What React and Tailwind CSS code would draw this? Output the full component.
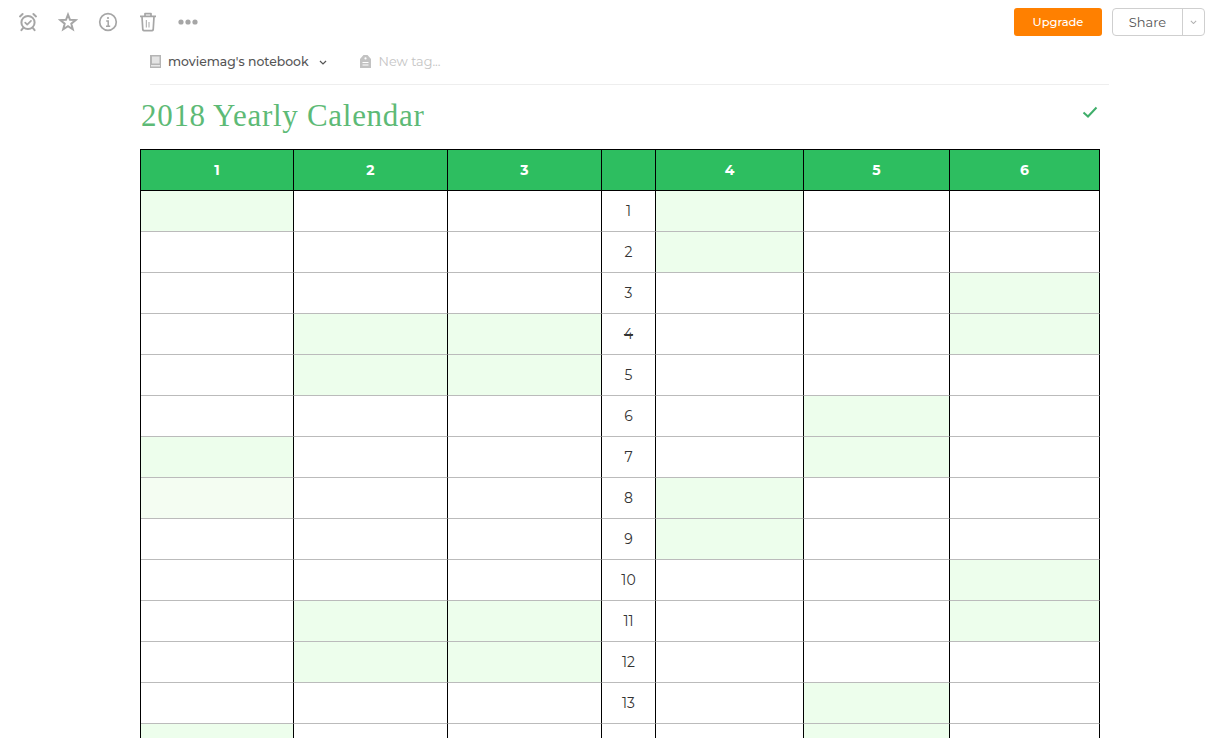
const cols = ["1", "2", "3", "", "4", "5", "6"];
const widths = ["w-[153px]", "w-[154px]", "w-[154px]", "w-[54px]", "w-[148px]", "w-[146px]", "w-[150px]"];
const fills = {
  1: [0, 4], 2: [4], 3: [6], 4: [1, 2, 6], 5: [1, 2], 6: [5], 7: [0, 5], 8: [0, 4], 9: [4],
  10: [6], 11: [1, 2, 6], 12: [1, 2], 13: [5], 14: [0, 5],
};
const rows = Array.from({ length: 14 }, (_, i) => i + 1);

function Alarm() {
  return (
    <svg width="20" height="20" viewBox="0 0 20 20" fill="none" stroke="#a6a6a6" strokeWidth="2" strokeLinecap="round" strokeLinejoin="round">
      <circle cx="10" cy="10.5" r="6.6" />
      <path d="M7.2 10.6l2 2L13 8.8" strokeWidth="1.7" />
      <path d="M2 4.4L4.6 2M18 4.4L15.4 2M5 16.2l-1.6 2M15 16.2l1.6 2" />
    </svg>
  );
}
function Star() {
  return (
    <svg width="20" height="20" viewBox="0 0 20 20" fill="none" stroke="#a6a6a6" strokeWidth="2" strokeLinejoin="miter">
      <path d="M10 2.6l2 5.2 5.8.3-4.5 3.6 1.5 5.6L10 14.2l-4.8 3.1 1.5-5.6L2.2 8.1 8 7.8z" />
    </svg>
  );
}
function Info() {
  return (
    <svg width="20" height="20" viewBox="0 0 20 20" fill="none" stroke="#a6a6a6" strokeWidth="1.7">
      <circle cx="10" cy="10" r="8.3" />
      <path d="M8.2 9h2v5M8 14.2h4.2" strokeWidth="1.5" />
      <circle cx="10" cy="6" r="1.1" fill="#a6a6a6" stroke="none" />
    </svg>
  );
}
function Trash() {
  return (
    <svg width="18" height="20" viewBox="0 0 18 20" fill="none" stroke="#a6a6a6" strokeWidth="1.7" strokeLinejoin="round">
      <path d="M1 4.4h16M6 4V1.6h6V4" />
      <path d="M3 4.6l.8 13.1a1 1 0 0 0 1 .9h8.4a1 1 0 0 0 1-.9L15 4.6" />
      <path d="M7.3 8v7.5M10 10v5.5" strokeWidth="1" />
    </svg>
  );
}
function Dots() {
  return (
    <svg width="20" height="6" viewBox="0 0 20 6" fill="#a6a6a6">
      <circle cx="3" cy="3" r="2.6" />
      <circle cx="10" cy="3" r="2.6" />
      <circle cx="17" cy="3" r="2.6" />
    </svg>
  );
}
function Notebook() {
  return (
    <svg width="11" height="13" viewBox="0 0 11 13">
      <path d="M0 0h11v13H0z" fill="#b5b5b5" />
      <path d="M2 1.5h7.5v7H2z" fill="#e4e4e4" />
      <path d="M1 10h9v1.5H1z" fill="#e8e8e8" />
    </svg>
  );
}
function Tag() {
  return (
    <svg width="11" height="13" viewBox="0 0 11 13">
      <path d="M3.5 0h4L11 4v9H0V4z" fill="#c2c2c2" />
      <circle cx="5.5" cy="3.4" r="1.1" fill="#fff" />
      <path d="M2.5 7h6v1h-6zM2.5 9.5h6v1h-6z" fill="#fff" />
    </svg>
  );
}
function Chevron({ color, size }) {
  return (
    <svg width={size} height={size * 0.65} viewBox="0 0 10 6.5" fill="none" stroke={color} strokeWidth="1.5">
      <path d="M1.2 1.2L5 5l3.8-3.8" />
    </svg>
  );
}

export default function App() {
  return (
    <div className="h-[738px] w-[1208px] overflow-hidden bg-white font-['Montserrat','Inter','Liberation_Sans',sans-serif]">
      <header className="flex h-[44px] items-center justify-between pl-[18px] pr-[3px]">
        <div className="flex items-center">
          <span className="mr-[20px] flex w-[20px] justify-center"><Alarm /></span>
          <span className="mr-[20px] flex w-[20px] justify-center"><Star /></span>
          <span className="mr-[20px] flex w-[20px] justify-center"><Info /></span>
          <span className="mr-[20px] flex w-[20px] justify-center"><Trash /></span>
          <span className="flex w-[20px] justify-center"><Dots /></span>
        </div>
        <div className="flex items-center">
          <button className="mr-[10px] h-[28px] w-[88px] rounded-[3px] bg-[#ff8000] pt-[1px] text-[11.5px] font-medium text-white">Upgrade</button>
          <div className="flex h-[28px] w-[93px] items-center rounded-[4px] border border-[#cfcfcf] pt-0 text-[13px] text-[#555555]">
            <span className="flex-1 translate-y-[1px] text-center">Share</span>
            <span className="flex h-full w-[22px] items-center justify-center border-l border-[#cfcfcf]">
              <Chevron color="#b0b0b0" size={7} />
            </span>
          </div>
        </div>
      </header>

      <div className="ml-[150px] flex h-[41px] w-[959px] items-start border-b border-[#eeeeee] pt-[10px]">
        <span className="flex h-[15px] items-center"><Notebook /></span>
        <span className="ml-[7px] text-[12.4px] font-medium leading-[15px] text-[#555555]">moviemag's notebook</span>
        <span className="ml-[10px] flex h-[15px] items-center pt-[2px]"><Chevron color="#555555" size={8} /></span>
        <span className="ml-[33px] flex h-[15px] items-center"><Tag /></span>
        <span className="ml-[8px] text-[12.8px] leading-[15px] text-[#c4c4c4]">New tag...</span>
      </div>

      <div className="ml-[140px] flex h-[64px] w-[960px] items-start justify-between">
        <h1 className="ml-[1px] mt-[12px] font-['Liberation_Serif',serif] text-[31px] leading-[38px] tracking-[0.7px] text-[#5dba76]">2018 Yearly Calendar</h1>
        <svg className="mr-[2px] mt-[20px]" width="16" height="14" viewBox="0 0 16 14" fill="none" stroke="#3fae6a" strokeWidth="2">
          <path d="M1.5 7.5L6 11.5 14.5 2.5" />
        </svg>
      </div>

      <div className="ml-[140px] w-[960px] border-l border-t border-black">
        <div className="flex">
          {cols.map((c, i) => (
            <div key={i} className={`${widths[i]} flex h-[41px] items-center justify-center border-b border-r border-black bg-[#2dbe60] text-[14px] font-bold text-white`}>
              {c}
            </div>
          ))}
        </div>
        {rows.map((r) => (
          <div key={r} className="flex">
            {cols.map((_, i) => (
              <div
                key={i}
                className={`${widths[i]} flex h-[41px] items-center justify-center border-b border-r border-b-[#bbbbbb] border-r-black text-[14px] text-[#333333] ${
                  fills[r].includes(i) ? (r === 8 && i === 0 ? "bg-[#f4fdf2]" : "bg-[#edfeec]") : "bg-white"
                } ${r === 4 ? "line-through" : ""}`}
              >
                {i === 3 && r < 14 ? r : ""}
              </div>
            ))}
          </div>
        ))}
      </div>
    </div>
  );
}
